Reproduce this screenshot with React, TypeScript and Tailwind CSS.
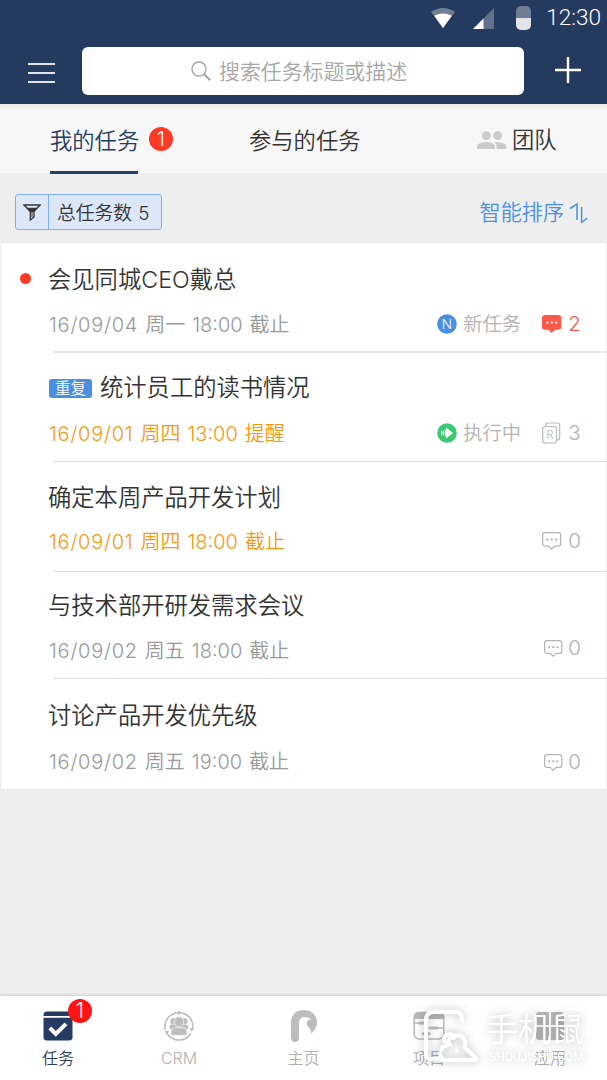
import { clsx } from "clsx"
import type { ReactNode } from "react"

type CommentKind = "unread" | "copies" | "empty" | "emptySmall"
type TaskStatus = "new" | "running"

interface Task {
  title: string
  date: string
  weekday: string
  time: string
  action: string
  count: number
  icon: CommentKind
  status?: TaskStatus
  unread?: boolean
  repeat?: boolean
  highlighted?: boolean
  rowClass: string
  metaClass: string
  countClass?: string
}

const TASKS: Task[] = [
  {
    title: "会见同城CEO戴总",
    date: "16/09/04",
    weekday: "周一",
    time: "18:00",
    action: "截止",
    count: 2,
    icon: "unread",
    status: "new",
    unread: true,
    rowClass: "h-[108px] pt-[21px]",
    metaClass: "mt-[15px]",
    countClass: "mb-0.5",
  },
  {
    title: "统计员工的读书情况",
    date: "16/09/01",
    weekday: "周四",
    time: "13:00",
    action: "提醒",
    count: 3,
    icon: "copies",
    status: "running",
    repeat: true,
    highlighted: true,
    rowClass: "h-[108px] pt-[19px]",
    metaClass: "mt-4",
    countClass: "mb-0.5",
  },
  {
    title: "确定本周产品开发计划",
    date: "16/09/01",
    weekday: "周四",
    time: "18:00",
    action: "截止",
    count: 0,
    icon: "empty",
    highlighted: true,
    rowClass: "h-[109px] pt-5",
    metaClass: "mt-[14px]",
    countClass: "mb-0.5",
  },
  {
    title: "与技术部开研发需求会议",
    date: "16/09/02",
    weekday: "周五",
    time: "18:00",
    action: "截止",
    count: 0,
    icon: "emptySmall",
    rowClass: "h-[106px] pt-[18px]",
    metaClass: "mt-[15px]",
    countClass: "mb-1.5",
  },
  {
    title: "讨论产品开发优先级",
    date: "16/09/02",
    weekday: "周五",
    time: "19:00",
    action: "截止",
    count: 0,
    icon: "emptySmall",
    rowClass: "h-[110px] pt-[21px]",
    metaClass: "mt-4",
  },
]

const STATUS_LABELS: Record<TaskStatus, string> = {
  new: "新任务",
  running: "执行中",
}

function StatusBar() {
  return (
    <div className="flex h-9 items-center justify-end pr-[6px] text-white">
      <svg width="24" height="20" viewBox="0 0 24 20" aria-hidden="true">
        <path d="M0 4Q12-4 24 4L12 20Z" fill="#fff" opacity=".35" />
        <path d="M3.2 7.8Q12 3 20.8 7.8L12 20Z" fill="#fff" />
      </svg>
      <svg className="ml-[18px]" width="21" height="21" viewBox="0 0 21 21" aria-hidden="true">
        <path d="M21 0V21H0Z" fill="#fff" opacity=".28" />
        <path d="M10.5 10.5V21H0Z" fill="#fff" />
      </svg>
      <span className="ml-[22px] flex h-[24px] w-[15px] flex-col overflow-hidden rounded-[5px]">
        <span className="h-3 bg-[#6f7c94]" />
        <span className="h-3 bg-[#e1e5ea]" />
      </span>
      <span className="ml-[15px] font-[Roboto,sans-serif] text-[22.6px] leading-9">12:30</span>
    </div>
  )
}

function SearchHeader() {
  return (
    <div className="flex h-[68px] items-start pt-[11px]">
      <button type="button" className="ml-[28px] mt-[16px] flex w-[27px] flex-col gap-[7px]" aria-label="菜单">
        <span className="h-0.5 w-full bg-[#dfe4ec]" />
        <span className="h-0.5 w-full bg-[#dfe4ec]" />
        <span className="h-0.5 w-full bg-[#dfe4ec]" />
      </button>
      <div className="ml-[27px] flex h-[48px] w-[442px] items-center rounded-[6px] bg-white pl-[108px] text-[#a6a6a6]">
        <svg width="22" height="22" viewBox="0 0 22 22" fill="none" stroke="#a6a6a6" aria-hidden="true">
          <circle cx="9" cy="9" r="7" strokeWidth="1.4" />
          <path d="M14.2 14.2L20.3 20.3" strokeWidth="2.2" />
        </svg>
        <span className="ml-[7px] mt-0.5 text-[20.9px] leading-[46px]">搜索任务标题或描述</span>
      </div>
      <svg className="ml-[31px] mt-[10px]" width="26" height="26" viewBox="0 0 26 26" aria-hidden="true">
        <path d="M13 0V26M0 13H26" stroke="#fff" strokeWidth="2.4" />
      </svg>
    </div>
  )
}

function TeamIcon() {
  return (
    <svg width="30" height="18" viewBox="0 0 30 18" fill="#cbcbcb" aria-hidden="true">
      <circle cx="9.3" cy="4.6" r="4.4" />
      <circle cx="20.6" cy="4.6" r="4.4" />
      <path d="M0 18V15.6C0 12.5 5.5 11 9.3 11S18 12.5 18 15.6V18Z" />
      <path d="M19.5 18V15.6C19.5 13.5 18.6 12.2 17.2 11.3C21.5 10.4 29.3 12 29.3 15.6V18Z" />
    </svg>
  )
}

function Tabs() {
  return (
    <div className="mt-1 flex h-[65px] bg-[#f7f7f7] text-[22.3px] leading-[66px] text-[#333]">
      <div className="ml-[50px] flex w-[199px]">
        <div className="flex h-[65.5px] w-[89px] shrink-0 flex-col text-[#253b62]">
          <span className="h-[62.5px] whitespace-nowrap">我的任务</span>
          <span className="h-[3px] w-[88px] bg-[#26406a]" />
        </div>
        <span className="ml-[10px] mt-[19px] flex size-6 items-center justify-center rounded-full bg-[#ff3a27] text-[20px] leading-6 text-white">
          1
        </span>
      </div>
      <div className="w-[228px]">参与的任务</div>
      <div className="flex items-center pb-0.5">
        <TeamIcon />
        <span className="ml-[5px] mt-px">团队</span>
      </div>
    </div>
  )
}

function FilterBar() {
  return (
    <div className="flex h-[70px] items-start justify-between pl-[15px] pr-[18px] pt-[21px]">
      <div className="flex h-9 w-[147px] rounded-[3px] border border-[#7fb0ee] bg-[#dce8f8]">
        <span className="flex w-[33px] items-center justify-center border-r border-[#7fb0ee]">
          <svg width="18" height="17" viewBox="0 0 18 17" fill="none" stroke="#333" aria-hidden="true">
            <path d="M1 1H17L11 7.3V13L7.3 16V7.3Z" strokeWidth="1.3" />
            <path d="M4 4.3H14L11 7.5H7Z" fill="#333" />
            <path d="M9 7V13" strokeWidth="1" />
          </svg>
        </span>
        <span className="pl-[8px] text-[18.8px] leading-[37px] text-[#333]">
          总任务数<span className="ml-[6px]">5</span>
        </span>
      </div>
      <div className="flex h-9 items-center text-[21.1px] leading-9 text-[#4a90e2]">
        <span className="mt-0.5">智能排序</span>
        <svg className="ml-[5px]" width="20" height="22" viewBox="0 0 20 22" fill="none" stroke="#4a90e2" strokeWidth="1.5" aria-hidden="true">
          <path d="M1 7.5L8 3V19" />
          <path d="M12.6 6V21.5L18.5 17" />
        </svg>
      </div>
    </div>
  )
}

function StatusIcon({ status }: { status: TaskStatus }) {
  if (status === "new") {
    return (
      <svg width="20" height="20" viewBox="0 0 20 20" aria-hidden="true">
        <circle cx="10" cy="10" r="9.8" fill="#4a90e2" />
        <text x="10" y="15" textAnchor="middle" fontSize="13.5" fill="#fff" fontFamily="Inter">
          N
        </text>
      </svg>
    )
  }
  return (
    <svg width="20" height="20" viewBox="0 0 20 20" aria-hidden="true">
      <circle cx="10" cy="10" r="9.8" fill="#3bca73" />
      <path d="M9 7.2V4.6L16 10L9 15.4V12.8H8V7.2Z" fill="#fff" />
      <path d="M5 7.8V12.2M6.8 7.4V12.6" stroke="#fff" strokeWidth="1" />
    </svg>
  )
}

function CountIcon({ kind }: { kind: CommentKind }) {
  if (kind === "copies") {
    return (
      <svg width="20" height="22" viewBox="0 0 20 22" fill="none" stroke="#b9b9b9" strokeWidth="1.2" aria-hidden="true">
        <path d="M3.7 4.5V3.5Q3.7 1 6.2 1H15.2Q17.7 1 17.7 3.5V15.5Q17.7 18 15 18" />
        <rect x=".7" y="4.5" width="13.8" height="16.5" rx="2.5" />
        <text x="7.8" y="17" textAnchor="middle" fontSize="11.5" fill="#b9b9b9" stroke="none" fontFamily="Inter">
          R
        </text>
      </svg>
    )
  }
  const unread = kind === "unread"
  const small = kind === "emptySmall"
  return (
    <svg
      className={clsx(small && "-mr-px")}
      width={small ? 19 : 20}
      height={small ? 17 : 18}
      viewBox="0 0 20 18"
      fill={unread ? "#fa5a4b" : "none"}
      stroke={unread ? "#fa5a4b" : "#b5b5b5"}
      strokeWidth="1.3"
      aria-hidden="true"
    >
      <path d="M3 .7H16.3Q18.7 .7 18.7 3.1V11.8Q18.7 14.2 16.3 14.2H12.8L9.7 17.1L6.6 14.2H3Q.6 14.2 .6 11.8V3.1Q.6 .7 3 .7Z" />
      <g fill={unread ? "#fff" : "#aaa"} stroke="none">
        <circle cx="5.4" cy="7.6" r="1.1" />
        <circle cx="9.8" cy="7.6" r="1.1" />
        <circle cx="14.2" cy="7.6" r="1.1" />
      </g>
    </svg>
  )
}

function TaskRow({ task }: { task: Task }) {
  return (
    <div className={clsx("flex", task.rowClass)}>
      <div className="flex h-8 w-[47px] shrink-0 items-center pb-1 pl-[19px]">
        {task.unread && <span className="size-[11px] rounded-full bg-[#ff3a27]" />}
      </div>
      <div className="flex-1">
        <div className="flex h-8 items-center text-[23.3px] leading-8 text-[#333]">
          {task.repeat && (
            <span className="ml-px mr-2 flex h-[19px] w-[43px] items-center justify-center rounded-[3px] bg-[#4a90e2] text-[15.5px] leading-[19px] text-white">
              重复
            </span>
          )}
          <span>{task.title}</span>
        </div>
        <div className={clsx("flex h-7 items-center", task.metaClass)}>
          <div
            className={clsx(
              "flex gap-[7px] pl-px text-[20px] leading-7",
              task.highlighted ? "text-[#f59a10]" : "text-[#999]",
            )}
          >
            <span className="tracking-[0.75px]">{task.date}</span>
            <span>{task.weekday}</span>
            <span>{task.time}</span>
            <span>{task.action}</span>
          </div>
          <div className={clsx("ml-auto flex items-center text-[#b2b2b2]", task.countClass)}>
            {task.status && (
              <div className="mr-[21px] flex items-center gap-[6px] text-[19.3px] leading-7">
                <StatusIcon status={task.status} />
                <span>{STATUS_LABELS[task.status]}</span>
              </div>
            )}
            <CountIcon kind={task.icon} />
            <span
              className={clsx(
                "ml-[6px] w-[13px] text-center text-[20.5px] leading-7",
                task.icon === "unread" && "text-[#fa5a4b]",
              )}
            >
              {task.count}
            </span>
          </div>
        </div>
      </div>
      <div className="w-[25px]" />
    </div>
  )
}

function TaskIcon() {
  return (
    <svg width="30" height="30" viewBox="0 0 30 30" aria-hidden="true">
      <path d="M.5 5V4Q.5 .5 4 .5H26Q29.5 .5 29.5 4V5Z" fill="#253b62" />
      <path d="M.5 6.8H29.5V26Q29.5 29.5 26 29.5H4Q.5 29.5 .5 26Z" fill="#253b62" />
      <path d="M6.8 17L12.8 23L23 12.8" fill="none" stroke="#fff" strokeWidth="4" />
    </svg>
  )
}

function CrmIcon() {
  return (
    <svg width="30" height="30" viewBox="0 0 30 30" fill="#bdbdbd" aria-hidden="true">
      <g fill="none" stroke="#bdbdbd" strokeWidth="1.6">
        <path d="M1.2 19A14 14 0 0 1 15 1.7" />
        <path d="M18 1.9A13.8 13.8 0 0 1 28.6 18" />
        <path d="M26.8 22.5A14 14 0 0 1 3.2 22.5" />
      </g>
      <path d="M14.3-.8L18 1.8L14.3 4.4ZM25.6 16.8L30.4 17.6L27.4 20.8ZM.6 20.3L4.8 19.8L3.4 24.2Z" />
      <circle cx="9.6" cy="10.3" r="3.2" />
      <circle cx="20.4" cy="10.3" r="3.2" />
      <rect x="5.6" y="13.6" width="18.8" height="5.4" rx="2.4" />
      <g stroke="#fff" strokeWidth=".7">
        <path d="M7 24.3V20.4Q7 16.8 10.9 16.8H19.1Q23 16.8 23 20.4V24.3Z" />
        <ellipse cx="15" cy="10.8" rx="4.7" ry="5.2" />
      </g>
    </svg>
  )
}

function HomeIcon() {
  return (
    <svg width="28" height="34" viewBox="0 0 28 34" aria-hidden="true">
      <path
        d="M1 29V14C1 6 6 1 14 1C22 1 27 6.5 27 13.5C27 18 24.5 22 21.2 24.5C21 20.5 19.5 18.8 17.3 17C16 14.8 16.5 12 18.7 11L21 10.4C19.8 9 17.2 8 14.5 8C11 8 9 10.5 9 14V29C9 34.5 1 34.5 1 29Z"
        fill="#bdbdbd"
      />
    </svg>
  )
}

function ProjectIcon() {
  return (
    <svg width="32" height="30" viewBox="0 0 32 30" fill="none" aria-hidden="true">
      <path d="M.8 8V6Q.8 1 5.8 1H26.2Q31.2 1 31.2 6V8Z" fill="#b9b9b9" />
      <rect x="1.2" y="1.6" width="29.6" height="26.4" rx="5" stroke="#b9b9b9" strokeWidth="1.5" />
      <path d="M2 12H12M15 17H30" stroke="#b9b9b9" strokeWidth="1.4" />
      <path d="M6.5 12H12.5M18 17H24M10 22.8H16" stroke="#b9b9b9" strokeWidth="3" strokeLinecap="round" />
    </svg>
  )
}

function AppsIcon() {
  return (
    <svg width="30" height="30" viewBox="0 0 30 30" fill="#b9b9b9" aria-hidden="true">
      <path d="M1 4Q1 1 4 1H14V14H1ZM16 1H26Q29 1 29 4V14H16ZM1 16H14V29H4Q1 29 1 26ZM16 16H29V26Q29 29 26 29H16Z" />
    </svg>
  )
}

function NavItem({
  icon,
  label,
  className,
  active,
}: { icon: ReactNode; label: string; className: string; active?: boolean }) {
  return (
    <div className={clsx("flex flex-col items-center", className, active ? "text-[#253b62]" : "text-[#b0b0b0]")}>
      <div className="relative mt-[12px] flex h-[35px] items-center">
        {icon}
        {active && (
          <span className="absolute -right-[19px] -top-[9px] flex size-[24px] items-center justify-center rounded-full bg-[#ff1414] text-[21px] leading-[24px] text-white">
            1
          </span>
        )}
      </div>
      <span className="mt-px text-[16px] leading-[29px]">{label}</span>
    </div>
  )
}

function Watermark() {
  return (
    <div className="pointer-events-none absolute left-[420px] top-[4px] flex text-white drop-shadow-[0_0_5px_rgba(0,0,0,0.28)]">
      <svg width="64" height="66" viewBox="0 0 64 66" fill="none" stroke="#fff" strokeWidth="4" strokeLinecap="round" aria-hidden="true">
        <path d="M42 21V19Q42 12 35 12H14Q6 12 6 20V54Q6 59 11 59H22" />
        <path
          d="M22 59C18 51 22 46 28 45C27 37 36 33 42 37C46 40 46 44 44 47L56 58Q56 60 53 60H22Z"
          strokeLinejoin="round"
        />
        <path d="M30 44A5 5 0 1 1 34 38" />
        <circle cx="37" cy="51" r="1" strokeWidth="2" />
      </svg>
      <div className="flex w-[105px] flex-col pl-px">
        <span className="mt-[10px] whitespace-nowrap text-[33px] leading-[38px]">手机鼠</span>
        <span className="pl-1 font-[Roboto,sans-serif] text-[12px] font-normal leading-[18px]">SHOUJISHU.COM</span>
      </div>
    </div>
  )
}

function BottomNav() {
  return (
    <nav className="relative mt-auto flex h-[84px] bg-white shadow-[0_-1px_3px_rgba(0,0,0,0.14)]">
      <NavItem className="w-[116px]" icon={<TaskIcon />} label="任务" active />
      <NavItem className="w-[126px]" icon={<CrmIcon />} label="CRM" />
      <NavItem className="w-[123px]" icon={<HomeIcon />} label="主页" />
      <NavItem className="w-[128px]" icon={<ProjectIcon />} label="项目" />
      <NavItem className="w-[114px]" icon={<AppsIcon />} label="应用" />
      <Watermark />
    </nav>
  )
}

export default function App() {
  return (
    <div className="flex h-[1080px] w-[607px] flex-col overflow-hidden bg-[#eee] font-[Inter,'Noto_Sans_CJK_SC_DemiLight','Noto_Sans_CJK_SC',sans-serif] font-light">
      <header className="h-[104px] shrink-0 bg-[#253a5f]">
        <StatusBar />
        <SearchHeader />
      </header>
      <Tabs />
      <FilterBar />
      <ul className="mx-px rounded-t-[2px] bg-white">
        {TASKS.map((task, i) => (
          <li key={task.title}>
            {/* El separador arranca alineado con el texto, no con el borde */}
            {i > 0 && (
              <div className={clsx("-mr-px ml-[52px]", i === 1 ? "h-0.5 bg-[#e8e8e8]" : "h-px bg-[#dcdcdc]")} />
            )}
            <TaskRow task={task} />
          </li>
        ))}
      </ul>
      <BottomNav />
    </div>
  )
}
